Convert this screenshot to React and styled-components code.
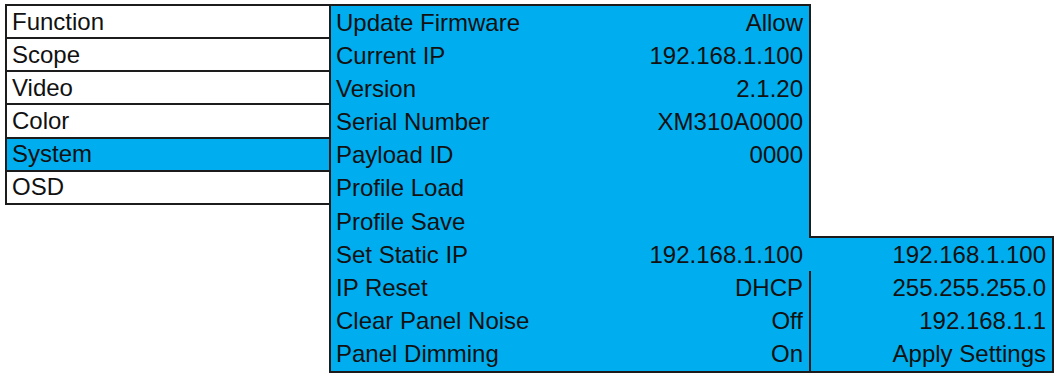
import React from "react";
import styled, { createGlobalStyle } from "styled-components";

const Global = createGlobalStyle`
  html, body { margin: 0; padding: 0; background: #ffffff; }
  body { font-family: "Liberation Sans", Arial, sans-serif; color: #111; }
`;

const LINE = "#1c1c1c";
const BLUE = "#00adee";

const Page = styled.div`
  display: flex;
  align-items: stretch;
  padding: 4px 0 0 5px;
  width: 1049px;
  height: 369px;
`;

const Menu = styled.div`
  align-self: flex-start;
  width: 322px;
  display: flex;
  flex-direction: column;
  border-top: 2px solid ${LINE};
  border-left: 2px solid ${LINE};
`;

const MenuItem = styled.div`
  height: 31.17px;
  display: flex;
  align-items: center;
  padding-left: 5px;
  font-size: 24px;
  background: ${(p) => (p.$active ? BLUE : "#ffffff")};
  border-bottom: 2px solid ${LINE};
`;

const Main = styled.div`
  width: 480px;
  display: flex;
  flex-direction: column;
  background: ${BLUE};
  border: 2px solid ${LINE};
  border-right: none;
`;

const Row = styled.div`
  height: 33.18px;
  display: flex;
  align-items: center;
  justify-content: space-between;
  padding: 0 6px 0 5px;
  font-size: 24px;
  border-right: 2px solid ${(p) => (p.$edge ? LINE : "transparent")};
`;

const SubPanel = styled.div`
  align-self: flex-end;
  width: 241px;
  display: flex;
  flex-direction: column;
  background: ${BLUE};
  border: 2px solid ${LINE};
  border-left: none;
`;

const SubRow = styled.div`
  height: 33.18px;
  display: flex;
  align-items: center;
  justify-content: flex-end;
  padding-right: 6px;
  font-size: 24px;
`;

const menu = ["Function", "Scope", "Video", "Color", "System", "OSD"];

const rows = [
  ["Update Firmware", "Allow", true],
  ["Current IP", "192.168.1.100", true],
  ["Version", "2.1.20", true],
  ["Serial Number", "XM310A0000", true],
  ["Payload ID", "0000", true],
  ["Profile Load", "", true],
  ["Profile Save", "", true],
  ["Set Static IP", "192.168.1.100", false],
  ["IP Reset", "DHCP", true],
  ["Clear Panel Noise", "Off", true],
  ["Panel Dimming", "On", true],
];

const sub = ["192.168.1.100", "255.255.255.0", "192.168.1.1", "Apply Settings"];

export default function App() {
  return (
    <>
      <Global />
      <Page>
        <Menu>
          {menu.map((m) => (
            <MenuItem key={m} $active={m === "System"}>
              {m}
            </MenuItem>
          ))}
        </Menu>
        <Main>
          {rows.map(([label, value, edge]) => (
            <Row key={label} $edge={edge}>
              <span>{label}</span>
              <span>{value}</span>
            </Row>
          ))}
        </Main>
        <SubPanel>
          {sub.map((s) => (
            <SubRow key={s}>{s}</SubRow>
          ))}
        </SubPanel>
      </Page>
    </>
  );
}
